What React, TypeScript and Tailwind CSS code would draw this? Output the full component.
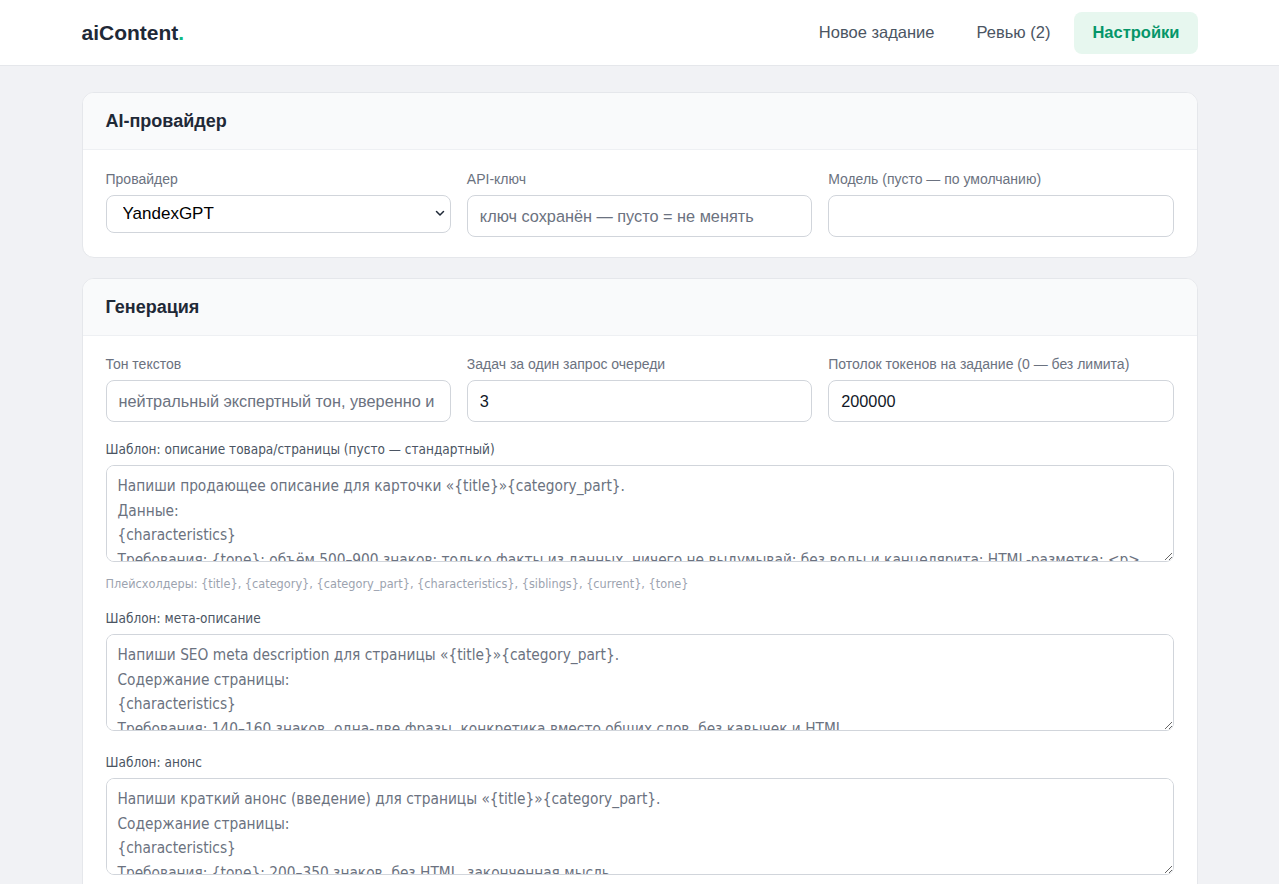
const sans = "font-['Liberation_Sans','Arial',sans-serif]";
const narrow = "font-['DejaVu_Sans_Condensed','Liberation_Sans',sans-serif]";

const inputCls =
  "w-full h-[42px] rounded-lg border border-[#d1d5db] bg-white px-3 text-[16.3px] text-[#111827] placeholder:text-[#6b7280] outline-none";

const Field = ({ label, children }: { label: string; children: React.ReactNode }) => (
  <div className="flex flex-col">
    <label className="text-sm text-[#6b7280] mb-[6px] leading-5">{label}</label>
    {children}
  </div>
);

const Card = ({ title, top, children }: { title: string; top: string; children: React.ReactNode }) => (
  <section className="bg-white border border-[#e5e7eb] rounded-xl overflow-hidden">
    <div className="h-[57px] flex items-center px-[23px] bg-[#f9fafb] border-b border-[#eef0f3]">
      <h2 className="text-lg font-bold text-[#1f2937]">{title}</h2>
    </div>
    <div className={`px-[23px] pb-5 ${top}`}>{children}</div>
  </section>
);

const Template = ({
  label,
  text,
  hint,
  className,
}: {
  label: string;
  text: string;
  hint?: string;
  className: string;
}) => (
  <div className={`flex flex-col ${className}`}>
    <label className={`text-[13.5px] text-[#4b5563] mb-[6px] leading-5 ${narrow}`}>{label}</label>
    <textarea
      className={`w-full h-[97px] rounded-lg border border-[#d1d5db] bg-white px-[11px] pt-2 pb-2 text-[15.3px] leading-[24.5px] text-[#111827] placeholder:text-[#6b7280] outline-none ${narrow}`}
      placeholder={text}
    />
    {hint && <p className={`mt-3 text-[12.6px] leading-5 text-[#9ca3af] ${narrow}`}>{hint}</p>}
  </div>
);

export default function App() {
  return (
    <div className={`min-h-screen bg-[#f1f2f5] ${sans}`}>
      <header className="bg-white border-b border-[#e5e7eb] h-[66px]">
        <div className="max-w-[1116px] mx-auto h-full flex items-center justify-between">
          <div className="text-[21px] font-bold text-[#1f2937]">
            aiContent<span className="text-[#10b981]">.</span>
          </div>
          <nav className="flex items-center gap-[6px] text-[16.5px]">
            <a className="px-[18px] h-[42px] flex items-center rounded-lg text-[#4b5563]">Новое задание</a>
            <a className="px-[18px] h-[42px] flex items-center rounded-lg text-[#4b5563]">Ревью (2)</a>
            <a className="px-[18px] h-[42px] flex items-center rounded-lg bg-[#e7f7ef] text-[#059669] font-bold">Настройки</a>
          </nav>
        </div>
      </header>
      <main className="max-w-[1116px] mx-auto pt-[26px] flex flex-col gap-5">
        <Card title="AI-провайдер" top="pt-[19px]">
          <div className="grid grid-cols-3 gap-4">
            <Field label="Провайдер">
              <div className="relative">
                <select className="w-full h-[38px] appearance-none rounded-lg border border-[#d1d5db] bg-white pl-4 pr-8 text-[17px] text-black outline-none">
                  <option>YandexGPT</option>
                </select>
                <svg
                  className="absolute right-[6px] top-[15px] pointer-events-none"
                  width="10"
                  height="7"
                  viewBox="0 0 10 7"
                  fill="none"
                  stroke="#1f2937"
                  strokeWidth="1.5"
                  strokeLinecap="round"
                  strokeLinejoin="round"
                >
                  <path d="M1.5 1.5 5 5l3.5-3.5" />
                </svg>
              </div>
            </Field>
            <Field label="API-ключ">
              <input className={inputCls} placeholder="ключ сохранён — пусто = не менять" />
            </Field>
            <Field label="Модель (пусто — по умолчанию)">
              <input className={inputCls} />
            </Field>
          </div>
        </Card>
        <Card title="Генерация" top="pt-[18px]">
          <div className="grid grid-cols-3 gap-4">
            <Field label="Тон текстов">
              <input className={inputCls} placeholder="нейтральный экспертный тон, уверенно и по делу" />
            </Field>
            <Field label="Задач за один запрос очереди">
              <input className={inputCls} defaultValue="3" />
            </Field>
            <Field label="Потолок токенов на задание (0 — без лимита)">
              <input className={inputCls} defaultValue="200000" />
            </Field>
          </div>
          <Template
            className="mt-[17px]"
            label="Шаблон: описание товара/страницы (пусто — стандартный)"
            text={"Напиши продающее описание для карточки «{title}»{category_part}.\nДанные:\n{characteristics}\nТребования: {tone}; объём 500–900 знаков; только факты из данных, ничего не выдумывай; без воды и канцелярита; HTML-разметка: <p>, <ul>, <li>."}
            hint="Плейсхолдеры: {title}, {category}, {category_part}, {characteristics}, {siblings}, {current}, {tone}"
          />
          <Template
            className="mt-[14px]"
            label="Шаблон: мета-описание"
            text={"Напиши SEO meta description для страницы «{title}»{category_part}.\nСодержание страницы:\n{characteristics}\nТребования: 140–160 знаков, одна-две фразы, конкретика вместо общих слов, без кавычек и HTML."}
          />
          <Template
            className="mt-[21px]"
            label="Шаблон: анонс"
            text={"Напиши краткий анонс (введение) для страницы «{title}»{category_part}.\nСодержание страницы:\n{characteristics}\nТребования: {tone}; 200–350 знаков, без HTML, законченная мысль."}
          />
        </Card>
      </main>
    </div>
  );
}
